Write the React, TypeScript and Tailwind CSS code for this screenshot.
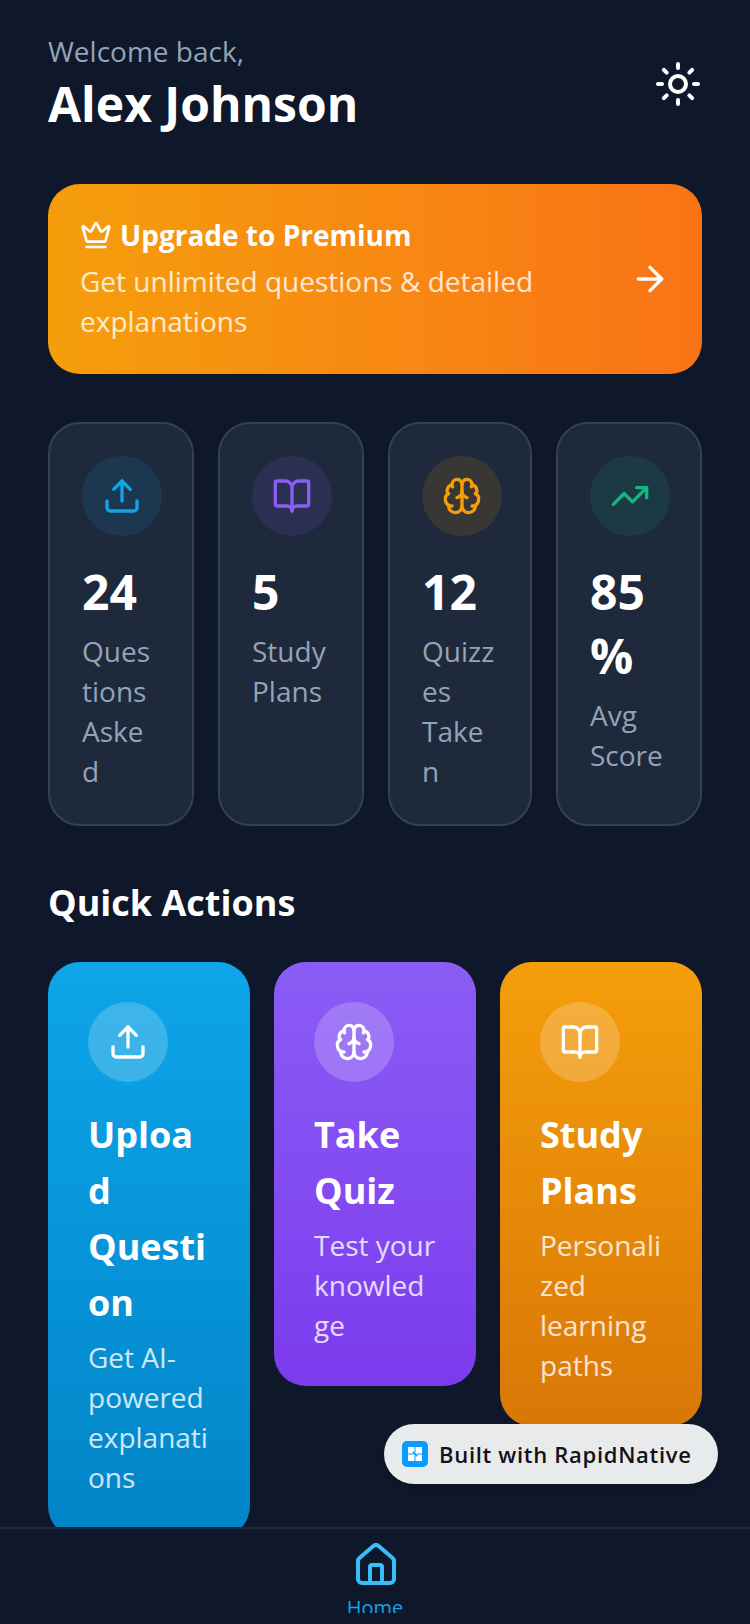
import { ArrowRight, BookOpen, Brain, Crown, House, Sun, TrendingUp, Upload } from 'lucide-react'
import type { LucideIcon } from 'lucide-react'

interface Stat {
  icon: LucideIcon
  value: string
  label: string
  iconClass: string
  circleClass: string
}

interface Action {
  icon: LucideIcon
  title: string
  description: string
  gradient: string
}

const stats: Stat[] = [
  { icon: Upload, value: '24', label: 'Questions Asked', iconClass: 'text-[#0ea5e9]', circleClass: 'bg-[#0ea5e9]/[0.125]' },
  { icon: BookOpen, value: '5', label: 'Study Plans', iconClass: 'text-[#8b5cf6]', circleClass: 'bg-[#8b5cf6]/[0.125]' },
  { icon: Brain, value: '12', label: 'Quizzes Taken', iconClass: 'text-[#f59e0b]', circleClass: 'bg-[#f59e0b]/[0.125]' },
  { icon: TrendingUp, value: '85%', label: 'Avg Score', iconClass: 'text-[#10b981]', circleClass: 'bg-[#10b981]/[0.125]' },
]

const actions: Action[] = [
  {
    icon: Upload,
    title: 'Upload Question',
    description: 'Get AI-powered explanations',
    gradient: 'from-[#0ea5e9] to-[#0284c7]',
  },
  {
    icon: Brain,
    title: 'Take Quiz',
    description: 'Test your knowledge',
    gradient: 'from-[#8b5cf6] to-[#7c3aed]',
  },
  {
    icon: BookOpen,
    title: 'Study Plans',
    description: 'Personalized learning paths',
    gradient: 'from-[#f59e0b] to-[#d97706]',
  },
]

function StatCard({ stat }: { stat: Stat }) {
  const Icon = stat.icon
  return (
    <div className="rounded-[32px] border-2 border-[#334155] bg-[#1e293b] pt-8 pr-[35px] pb-[33px] pl-8">
      <div className={`flex h-20 w-20 items-center justify-center rounded-full ${stat.circleClass}`}>
        <Icon size={40} className={stat.iconClass} />
      </div>
      <div className="mt-6 text-[48px] leading-[64px] font-bold text-white [overflow-wrap:anywhere]">{stat.value}</div>
      <div className="mt-[7px] text-[28px] leading-10 text-[#94a3b8] [overflow-wrap:anywhere]">{stat.label}</div>
    </div>
  )
}

function ActionCard({ action }: { action: Action }) {
  const Icon = action.icon
  return (
    <div className={`rounded-[32px] bg-gradient-to-b p-10 pb-[41px] ${action.gradient}`}>
      <div className="flex h-20 w-20 items-center justify-center rounded-full bg-white/20">
        <Icon size={40} className="text-white" />
      </div>
      <div className="mt-[25px] text-[36px] leading-14 font-bold text-white [overflow-wrap:anywhere]">{action.title}</div>
      <div className="mt-[6px] text-[28px] leading-10 text-white/80 [overflow-wrap:anywhere]">{action.description}</div>
    </div>
  )
}

export default function App() {
  return (
    <div className="relative flex h-[1624px] w-[750px] flex-col overflow-hidden bg-[#0f172a] font-['Open_Sans',sans-serif]">
      <div className="min-h-0 flex-1 overflow-hidden px-12 pt-8">
        <div className="flex items-center justify-between">
          <div>
            <div className="text-[28px] leading-[38px] text-[#94a3b8]">Welcome back,</div>
            <div className="mt-[2px] text-[48px] leading-16 font-bold text-white">Alex Johnson</div>
          </div>
          <Sun size={48} className="text-white" />
        </div>

        <div className="mt-12 flex items-center justify-between rounded-[32px] bg-gradient-to-r from-[#f59e0b] to-[#f97316] px-8 pt-8 pb-[33px]">
          <div className="min-w-0 flex-1 pr-8">
            <div className="flex items-center gap-2">
              <Crown size={32} className="text-white" />
              <span className="text-[28px] leading-[38px] font-bold text-white">Upgrade to Premium</span>
            </div>
            <div className="mt-[7px] text-[28px] leading-10 text-white/80">Get unlimited questions &amp; detailed explanations</div>
          </div>
          <ArrowRight size={40} className="shrink-0 text-white" />
        </div>

        <div className="mt-12 grid grid-cols-[146px_146px_144px_146px] gap-6">
          {stats.map((stat) => (
            <StatCard key={stat.label} stat={stat} />
          ))}
        </div>

        <div className="mt-[49px] mb-[31px] text-[36px] leading-14 font-bold text-white">Quick Actions</div>

        <div className="grid grid-cols-3 items-start gap-6">
          {actions.map((action) => (
            <ActionCard key={action.title} action={action} />
          ))}
        </div>
      </div>

      <div className="h-[97px] shrink-0 border-t-2 border-[#1e293b] bg-[#0f172a]">
        <div className="flex flex-col items-center pt-3">
          <House size={48} className="ml-[2px] text-[#38bdf8]" />
          <div className="h-6 overflow-hidden pt-[5px] text-[20px] leading-7 text-[#0ea5e9]">Home</div>
        </div>
      </div>

      <div className="absolute top-[1424px] left-[384px] flex h-[60px] w-[334px] items-center gap-[11px] rounded-full bg-[#e9eaec] pl-[18px] shadow-md">
        <svg width="26" height="26" viewBox="0 0 26 26">
          <rect width="26" height="26" rx="5" fill="#0a9bff" />
          <rect x="6" y="6" width="14" height="14" fill="#fff" />
          <path d="M13 6v5M13 15v5M6 13h5M15 13h5" stroke="#0a9bff" strokeWidth="1" />
          <path d="M11 11l4 4" stroke="#0a9bff" strokeWidth="2" />
        </svg>
        <span className="text-[22px] font-semibold tracking-[0.7px] text-[#111318]">Built with RapidNative</span>
      </div>
    </div>
  )
}
